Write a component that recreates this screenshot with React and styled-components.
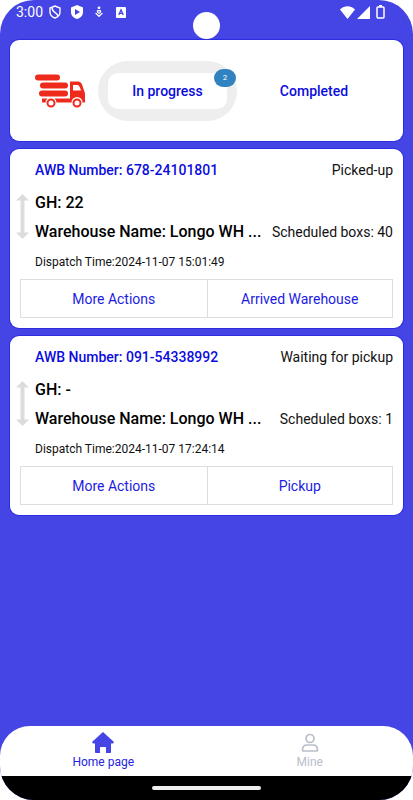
import React from "react";
import styled, { createGlobalStyle } from "styled-components";

const colors = {
  page: "#4545e6",
  link: "#0c0ce0",
  muted: "#b9bec9",
  line: "#dedede",
  badge: "#3182c0",
  truck: "#ee2a1c",
};

const GlobalStyle = createGlobalStyle`
  * { box-sizing: border-box; }
  body { margin: 0; background: #fff; }
`;

const Screen = styled.div`
  position: relative;
  display: flex;
  flex-direction: column;
  min-height: 100vh;
  overflow: hidden;
  border-radius: 34px;
  background: ${colors.page};
  color: #000;
  font-family: Roboto, "Liberation Sans", sans-serif;
`;

const StatusBar = styled.header`
  display: flex;
  align-items: center;
  justify-content: space-between;
  height: 24px;
  margin-bottom: 16px;
  padding: 0 28px 0 16px;
  color: #fff;
`;

const StatusGroup = styled.div`
  display: flex;
  align-items: center;
  gap: ${({ $gap }) => $gap}px;
`;

const Clock = styled.time`
  font-size: 14px;
  line-height: 24px;
  margin-right: -4px;
`;

const Camera = styled.div`
  position: absolute;
  top: 12px;
  left: 50%;
  width: 27px;
  height: 27px;
  margin-left: -14px;
  border-radius: 50%;
  background: #fff;
`;

const Content = styled.main`
  flex: 1;
  display: flex;
  flex-direction: column;
  gap: 8px;
  padding: 0 10px;
`;

const Card = styled.section`
  border-radius: 9px;
  background: #fff;
  box-shadow: 0 0 0 1px #2c2ce0;
`;

const TabsCard = styled(Card)`
  display: flex;
  align-items: center;
  height: 101px;
  padding: 0 12px 0 25px;
`;

const TruckIcon = styled.svg`
  flex: none;
  width: 51px;
  height: 36px;
  margin-right: 12px;
`;

const Tab = styled.button`
  flex: none;
  padding: 0;
  border: 0;
  background: none;
  color: ${colors.link};
  font-family: inherit;
  font-size: 14px;
  font-weight: 500;
  line-height: 20px;
  cursor: pointer;
`;

const ActivePill = styled.div`
  position: relative;
  flex: none;
  display: flex;
  padding: 12px 10px;
  border-radius: 30px;
  background: #eee;
`;

const ActiveTab = styled(Tab)`
  width: 119px;
  height: 36px;
  border-radius: 10px;
  background: #fff;
`;

const Badge = styled.span`
  position: absolute;
  top: 8px;
  right: 1px;
  width: 22px;
  border-radius: 9px;
  background: ${colors.badge};
  color: #fff;
  font-size: 8px;
  line-height: 18px;
  text-align: center;
`;

const TabSlot = styled.div`
  flex: 1;
  display: flex;
  justify-content: center;
`;

const OrderCard = styled(Card)`
  padding: 10px;
`;

const Row = styled.div`
  display: flex;
  align-items: center;
  justify-content: space-between;
  gap: 8px;
`;

const TitleRow = styled(Row)`
  margin: 0 0 7px 15px;
`;

const AwbNumber = styled.h2`
  margin: 0;
  font-size: 14px;
  font-weight: 500;
  line-height: 22px;
  color: ${colors.link};
`;

const Info = styled.span`
  flex: none;
  color: #111;
  font-size: 14px;
  line-height: 22px;
`;

const Route = styled.div`
  display: flex;
  align-items: flex-start;
`;

const RouteArrow = styled.svg`
  flex: none;
  width: 13px;
  height: 45px;
  margin: 6px 6px 0 -4px;
`;

const RouteLines = styled.div`
  flex: 1;
  min-width: 0;
`;

const Place = styled.p`
  margin: 0;
  font-size: 16px;
  font-weight: 500;
  line-height: 29px;
  white-space: nowrap;
`;

const Dispatch = styled.p`
  margin: 6px 0 7px 15px;
  color: #111;
  font-size: 12px;
  line-height: 20px;
`;

const Actions = styled.div`
  display: grid;
  grid-template-columns: 1fr 1fr;
  height: 39px;
  border: 1px solid ${colors.line};
`;

const Action = styled.button`
  padding: 0;
  border: 0;
  background: none;
  color: #1c1ce2;
  font-family: inherit;
  font-size: 14px;
  cursor: pointer;

  & + & {
    border-left: 1px solid ${colors.line};
  }
`;

const NavBar = styled.nav`
  display: grid;
  grid-template-columns: 1fr 1fr;
  height: 50px;
  border-radius: 30px 30px 0 0;
  background: #fff;
`;

const NavLink = styled.a`
  display: flex;
  flex-direction: column;
  align-items: center;
  padding-top: 6px;
  color: ${({ $active }) => ($active ? colors.page : colors.muted)};
  font-size: 12px;
  line-height: 17px;
  text-decoration: none;

  span { color: ${({ $active }) => ($active ? "#2424e2" : colors.muted)}; }
`;

const GestureArea = styled.footer`
  display: flex;
  align-items: center;
  justify-content: center;
  height: 24px;
  background: #000;
`;

const GestureBar = styled.div`
  width: 109px;
  height: 4px;
  border-radius: 2px;
  background: #f0eeee;
`;

const orders = [
  {
    awb: "678-24101801",
    status: "Picked-up",
    gh: "22",
    boxes: 40,
    dispatch: "2024-11-07 15:01:49",
    action: "Arrived Warehouse",
  },
  {
    awb: "091-54338992",
    status: "Waiting for pickup",
    gh: "-",
    boxes: 1,
    dispatch: "2024-11-07 17:24:14",
    action: "Pickup",
  },
];

function Truck() {
  return (
    <TruckIcon viewBox="0 0 51 36" aria-hidden="true">
      <g fill={colors.truck}>
        <rect x="0" y="1.500" width="25" height="6" rx="3" />
        <rect x="5" y="9.500" width="28" height="6" rx="3" />
        <rect x="4" y="17.500" width="29" height="6" rx="3" />
        <path d="M35 8.500h7c4 0 5 2 6 6l2 6v9h-2.500a5.500 5.500 0 0 0-11 0H21.500a5.500 5.500 0 0 0-2-4H35z" />
        <path d="M7 25.500h5.500a5.500 5.500 0 0 0-2 4H8c-.6 0-1-.4-1-1z" />
      </g>
      <path d="M38 12h4c2 0 3 2 4 5.500h-8z" fill="#fff" />
      <g fill="#fff" stroke={colors.truck} strokeWidth="2">
        <circle cx="16" cy="30" r="3.500" />
        <circle cx="42" cy="30" r="3.500" />
      </g>
    </TruckIcon>
  );
}

function StatusIcons() {
  return (
    <>
      <svg width="12" height="14" viewBox="0 0 12 14" fill="none" stroke="#fff" strokeWidth="1.400" aria-hidden="true">
        <path d="M6 1 1 3v4c0 3 2 5 5 6 3-1 5-3 5-6V3zM3.200 3c-.4 5 5.600 4 5.600 8" />
      </svg>
      <svg width="12" height="14" viewBox="0 0 12 14" aria-hidden="true">
        <path d="M6 0 0 2.500V7c0 3.500 2.500 6 6 7 3.500-1 6-3.500 6-7V2.500z" fill="#fff" />
        <path d="M4 4v6l5-3z" fill={colors.page} />
      </svg>
      <svg width="12" height="12" viewBox="-2 0 12 12" fill="none" stroke="#fff" strokeWidth="1.200" aria-hidden="true">
        <path d="M4 7.500C1.500 6 2.200 3.500 4 5c1.800-1.500 2.500 1 0 2.500zM.6 7 4 10.500 7.400 7" />
        <circle cx="4" cy="1.800" r=".8" fill="#fff" />
      </svg>
      <svg width="12" height="11" viewBox="-1 0 12 11" aria-hidden="true">
        <rect width="10" height="11" rx="1" fill="#fff" />
        <path d="M2.700 8 5 2.800 7.300 8M3.500 6.300h3" fill="none" stroke={colors.page} strokeWidth="1.300" />
      </svg>
    </>
  );
}

function SignalIcons() {
  return (
    <>
      <svg width="15" height="13" viewBox="0 0 15 13" fill="#fff" aria-hidden="true">
        <path d="M0 3.500C4.500-.8 10.500-.8 15 3.500L7.500 13z" />
      </svg>
      <svg width="13" height="13" viewBox="0 0 13 13" fill="#fff" aria-hidden="true">
        <path d="M13 0v13H0z" />
      </svg>
      <svg width="13" height="14" viewBox="-4 0 13 14" aria-hidden="true">
        <path d="M3 0h3v2H3z" fill="#fff" />
        <rect x="1" y="2" width="7" height="11" rx="1" fill="none" stroke="#fff" strokeWidth="1.500" />
      </svg>
    </>
  );
}

function Order({ order }) {
  return (
    <OrderCard as="article">
      <TitleRow>
        <AwbNumber>AWB Number: {order.awb}</AwbNumber>
        <Info>{order.status}</Info>
      </TitleRow>
      <Route>
        <RouteArrow viewBox="0 0 13 45" fill="#dcdcdc" aria-hidden="true">
          <path d="M6.500 0 13 6.500H8.500v32H13L6.500 45 0 38.500h4.500v-32H0z" />
        </RouteArrow>
        <RouteLines>
          <Place>GH: {order.gh}</Place>
          <Row>
            <Place>Warehouse Name: Longo WH ...</Place>
            <Info>Scheduled boxs: {order.boxes}</Info>
          </Row>
        </RouteLines>
      </Route>
      <Dispatch>Dispatch Time:{order.dispatch}</Dispatch>
      <Actions>
        <Action type="button">More Actions</Action>
        <Action type="button">{order.action}</Action>
      </Actions>
    </OrderCard>
  );
}

export default function App() {
  return (
    <>
      <GlobalStyle />
      <Screen>
        <StatusBar>
          <StatusGroup $gap={10}>
            <Clock>3:00</Clock>
            <StatusIcons />
          </StatusGroup>
          <StatusGroup $gap={2}>
            <SignalIcons />
          </StatusGroup>
        </StatusBar>
        <Camera />
        <Content>
          <TabsCard>
            <Truck />
            <ActivePill>
              <ActiveTab type="button">In progress</ActiveTab>
              <Badge>2</Badge>
            </ActivePill>
            <TabSlot>
              <Tab type="button">Completed</Tab>
            </TabSlot>
          </TabsCard>
          {orders.map((order) => (
            <Order key={order.awb} order={order} />
          ))}
        </Content>
        <NavBar>
          <NavLink href="#home" $active>
            <svg width="22" height="22" viewBox="0 0 22 22" fill="currentColor" aria-hidden="true">
              <path d="M11 0 0 10l1 1.500h2V20c0 .6.400 1 1 1h4v-5c0-.6.400-1 1-1h4c.6 0 1 .4 1 1v5h4c.6 0 1-.4 1-1v-8.500h2L22 10z" />
            </svg>
            <span>Home page</span>
          </NavLink>
          <NavLink href="#mine">
            <svg width="22" height="22" viewBox="0 0 22 22" fill="none" stroke="currentColor" strokeWidth="1.700" aria-hidden="true">
              <circle cx="11" cy="6.500" r="4" />
              <path d="M8 13h6c3 0 4.500 2 4.500 5 0 .6-.4 1-1 1h-13c-.6 0-1-.4-1-1 0-3 1.500-5 4.500-5z" />
            </svg>
            <span>Mine</span>
          </NavLink>
        </NavBar>
        <GestureArea>
          <GestureBar />
        </GestureArea>
      </Screen>
    </>
  );
}
